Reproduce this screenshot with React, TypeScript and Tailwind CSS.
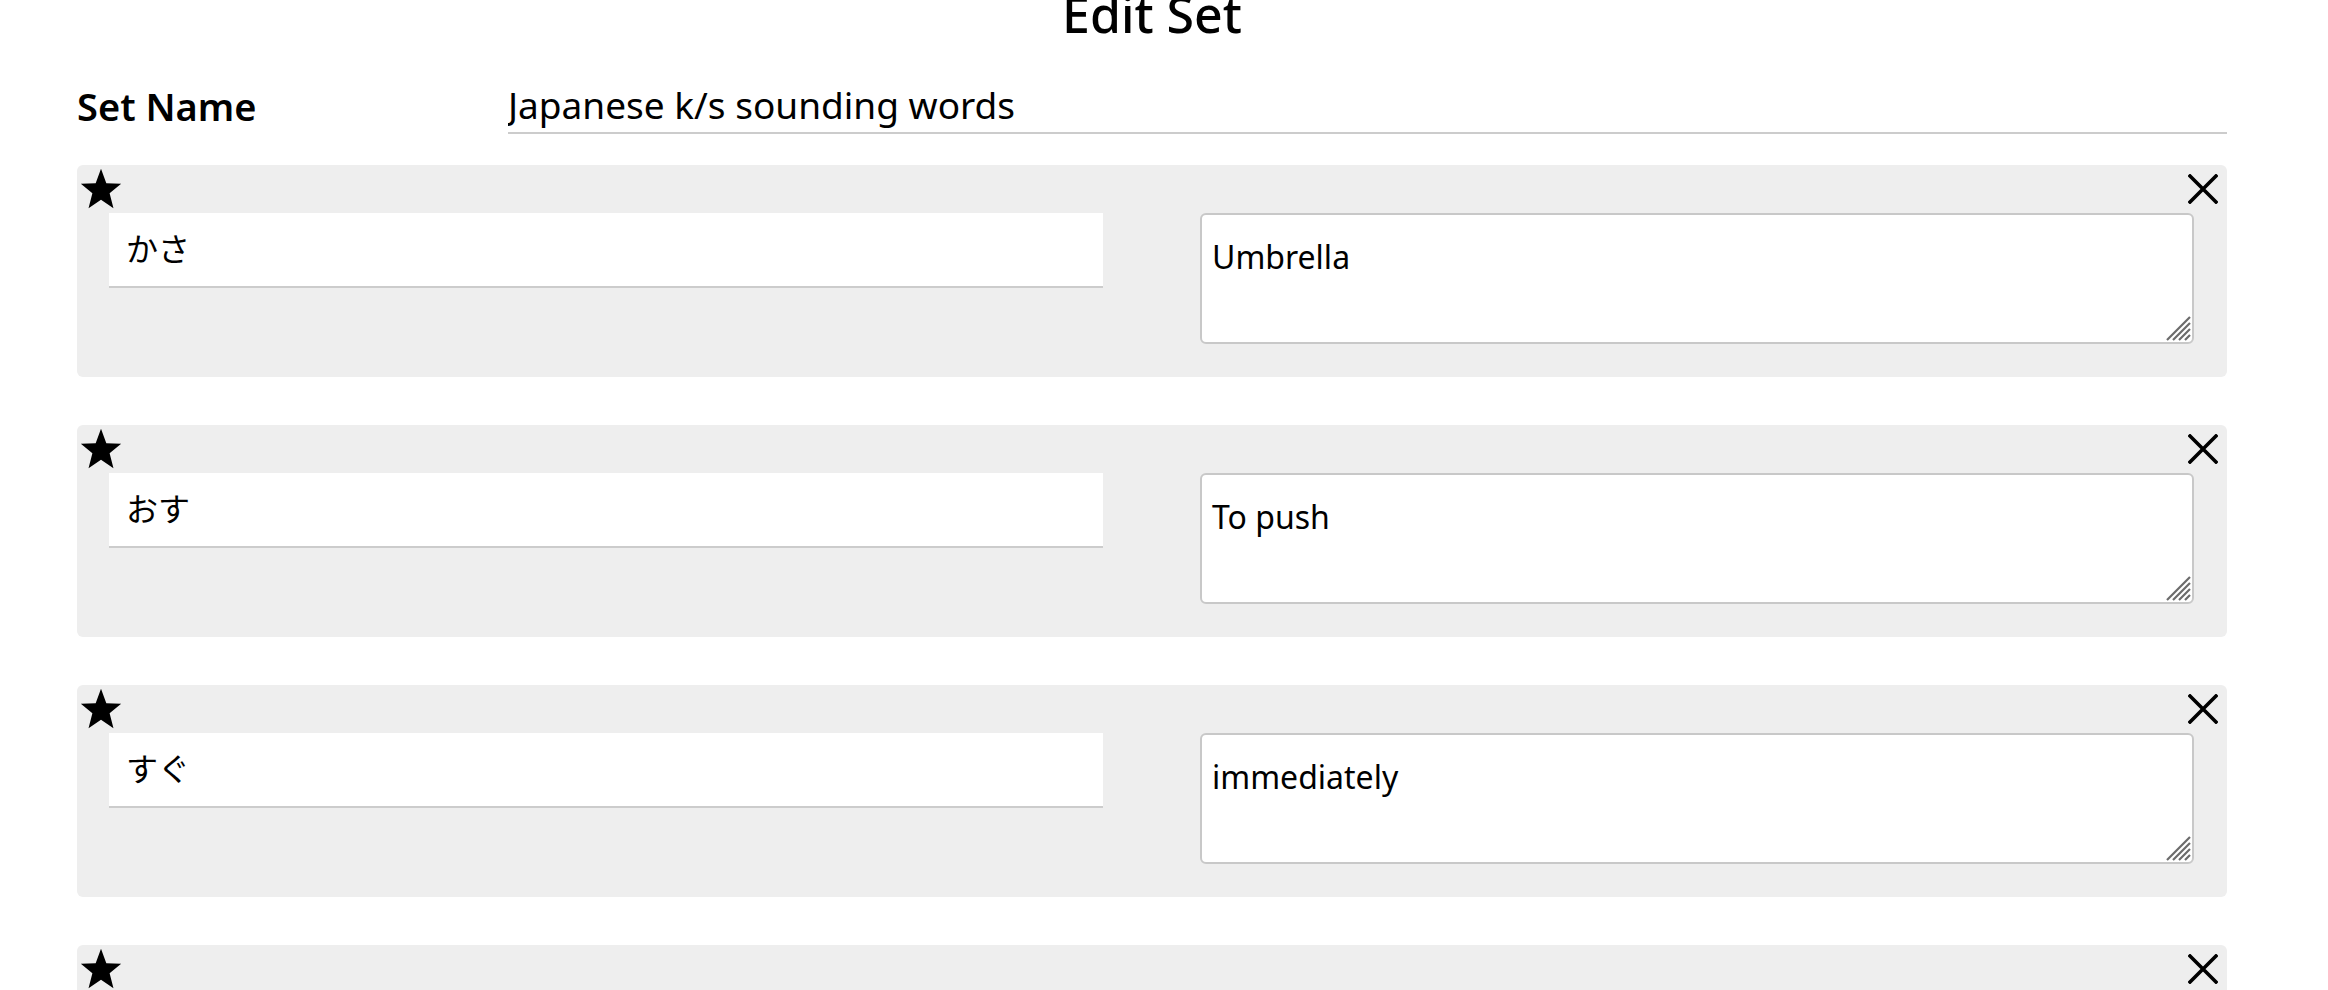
const cards = [
  { term: "かさ", definition: "Umbrella" },
  { term: "おす", definition: "To push" },
  { term: "すぐ", definition: "immediately" },
  { term: "", definition: "" },
];

function StarIcon() {
  return (
    <svg width="44" height="44" viewBox="0 0 24 24" aria-hidden="true">
      <polygon
        points="12,1 14.9,8.8 23,9.2 16.7,14.3 18.8,22.5 12,17.9 5.2,22.5 7.3,14.3 1,9.2 9.1,8.8"
        fill="#000"
      />
    </svg>
  );
}

function CloseIcon() {
  return (
    <svg width="30" height="30" viewBox="0 0 30 30" aria-hidden="true">
      <path d="M2 2 L28 28 M28 2 L2 28" stroke="#000" strokeWidth="3.6" strokeLinecap="square" />
    </svg>
  );
}

function ResizeGrip() {
  return (
    <svg width="26" height="26" viewBox="0 0 26 26" aria-hidden="true">
      <path
        d="M2 25 L25 2 M8 25 L25 8 M14 25 L25 14 M20 25 L25 20"
        stroke="#6b6b6b"
        strokeWidth="2.2"
      />
    </svg>
  );
}

function Card({ term, definition }: { term: string; definition: string }) {
  return (
    <div className="rounded-[6px] bg-[#eeeeee] pb-[33px]">
      <div className="flex h-[48px] items-start justify-between">
        <div className="ml-[2px] mt-[2px]">
          <StarIcon />
        </div>
        <div className="mr-[9px] mt-[9px]">
          <CloseIcon />
        </div>
      </div>
      <div className="grid grid-cols-2 gap-[97px] pl-[32px] pr-[33px]">
        <input
          defaultValue={term}
          className="h-[75px] w-full border-b-2 border-[#cccccc] bg-white px-[17px] pb-[5px] text-[32px] text-black outline-none"
        />
        <div className="relative h-[131px]">
          <textarea
            defaultValue={definition}
            className="h-full w-full resize-none rounded-[6px] border-2 border-[#c8c8c8] bg-white px-[10px] pt-[18px] text-[32px] text-black outline-none"
          />
          <div className="pointer-events-none absolute bottom-[3px] right-[3px]">
            <ResizeGrip />
          </div>
        </div>
      </div>
    </div>
  );
}

export default function App() {
  return (
    <div className="min-h-screen overflow-hidden bg-white font-['Noto_Sans','Noto_Sans_CJK_JP',sans-serif] text-black">
      <div className="ml-[77px] w-[2150px]">
        <h1 className="-mt-[11px] text-center text-[50px] font-medium leading-none">Edit Set</h1>

        <div className="mt-[45px] flex items-end">
          <label className="mb-[9px] w-[431px] text-[38px] font-semibold leading-none">Set Name</label>
          <input
            defaultValue="Japanese k/s sounding words"
            className="h-[50px] flex-1 border-b-2 border-[#cccccc] bg-white pb-[7px] text-[37px] text-black outline-none"
          />
        </div>

        <div className="mt-[31px] flex flex-col gap-[48px]">
          {cards.map((c, i) => (
            <Card key={i} term={c.term} definition={c.definition} />
          ))}
        </div>
      </div>
    </div>
  );
}
